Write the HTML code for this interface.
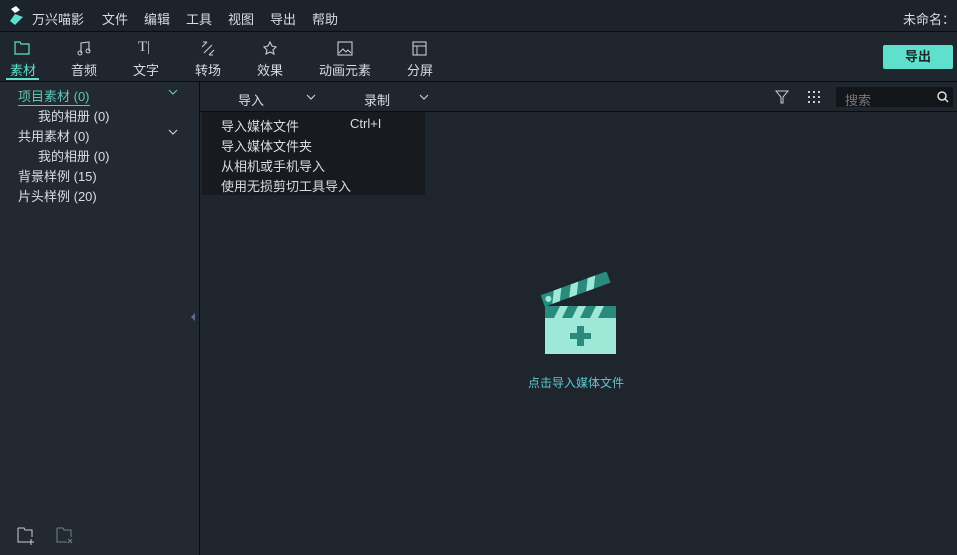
<!DOCTYPE html>
<html><head><meta charset="utf-8"><style>
*{margin:0;padding:0;box-sizing:border-box}
body{width:957px;height:555px;background:#1f252d;font-family:"Liberation Sans","Noto Sans CJK SC",sans-serif;color:#d8dde2;font-size:13px;position:relative;overflow:hidden;white-space:nowrap}
.a{position:absolute}
.menu span{position:absolute;top:9px;font-size:13px}
.tb{position:absolute;top:60px;font-size:13px;color:#d8dde2}
.ic{position:absolute;top:41px}
.chev{position:absolute}
</style></head><body>
<div class="a" style="left:0;top:0;width:957px;height:31px;background:#1d232b"></div>
<div class="a" style="left:0;top:31px;width:957px;height:1px;background:#0b0d10"></div>
<div class="a menu" style="left:0;top:0;width:957px;height:31px">
<svg class="a" style="left:8px;top:6px" width="18" height="20"><path d="M3 3l5-3 4 4-5 3z" fill="#fff"/><path d="M7 8l8 3-8 8-5-4z" fill="#5ee0cc"/></svg>
<span style="left:32px">万兴喵影</span><span style="left:102px">文件</span><span style="left:144px">编辑</span><span style="left:186px">工具</span><span style="left:228px">视图</span><span style="left:270px">导出</span><span style="left:312px">帮助</span>
<span style="left:903px">未命名：</span>
</div>
<div class="a" style="left:0;top:32px;width:957px;height:49px;background:#1f262e"></div>
<div class="a" style="left:0;top:81px;width:957px;height:1px;background:#0b0d10"></div>
<svg class="ic" style="left:14px" width="16" height="14"><path d="M1 1h5l1 2h8v10H1z" fill="none" stroke="#5ee0cc" stroke-width="1.2"/></svg>
<svg class="ic" style="left:77px" width="14" height="15"><path d="M4 12V2l8-1v9" fill="none" stroke="#ccc" stroke-width="1.1"/><circle cx="3" cy="12" r="2" fill="none" stroke="#ccc"/><circle cx="11" cy="10" r="2" fill="none" stroke="#ccc"/></svg>
<div class="a" style="left:138px;top:39px;color:#ccc;font-size:15px;font-family:'Liberation Serif',serif">T|</div>
<svg class="ic" style="left:200px" width="16" height="15"><path d="M2 6l5-5M7 1h-4M14 9l-5 5M9 14h4M4 12L12 4" fill="none" stroke="#ccc" stroke-width="1.1"/></svg>
<svg class="ic" style="left:263px" width="14" height="14"><path d="M7 1l2 4 4 1-3 3 1 4-4-2-4 2 1-4-3-3 4-1z" fill="none" stroke="#ccc" stroke-width="1.1"/></svg>
<svg class="ic" style="left:337px" width="16" height="15"><rect x="1" y="1" width="14" height="13" fill="none" stroke="#ccc" stroke-width="1.1"/><path d="M2 12l4-4 3 3 2-2 3 3" fill="none" stroke="#ccc"/></svg>
<svg class="ic" style="left:412px" width="16" height="15"><rect x="1" y="1" width="13" height="13" fill="none" stroke="#ccc" stroke-width="1.1"/><path d="M1 5h13M5 5v9" stroke="#ccc"/></svg>
<div class="tb" style="left:10px;color:#5ee0cc">素材</div>
<div class="a" style="left:6px;top:78px;width:33px;height:2px;background:#5ee0cc"></div>
<div class="tb" style="left:71px">音频</div><div class="tb" style="left:133px">文字</div><div class="tb" style="left:195px">转场</div><div class="tb" style="left:257px">效果</div><div class="tb" style="left:319px">动画元素</div><div class="tb" style="left:407px">分屏</div>
<div class="a" style="left:883px;top:45px;width:70px;height:24px;background:#5ee0cc;border-radius:2px;color:#1a2a2a;font-weight:bold;text-align:center;line-height:24px">导出</div>
<div class="a" style="left:0;top:82px;width:199px;height:473px;background:#222931"></div>
<div class="a" style="left:199px;top:82px;width:1px;height:473px;background:#0b0d10"></div>
<div class="a" style="left:18px;top:86px;color:#5ec8b8;border-bottom:1px solid #5ec8b8">项目素材 (0)</div>
<svg class="chev" style="left:168px;top:89px" width="10" height="6"><path d="M1 1l4 4 4-4" fill="none" stroke="#5ec8b8" stroke-width="1.2"/></svg>
<div class="a" style="left:38px;top:106px">我的相册 (0)</div>
<div class="a" style="left:18px;top:126px">共用素材 (0)</div>
<svg class="chev" style="left:168px;top:129px" width="10" height="6"><path d="M1 1l4 4 4-4" fill="none" stroke="#ccc" stroke-width="1.2"/></svg>
<div class="a" style="left:38px;top:146px">我的相册 (0)</div>
<div class="a" style="left:18px;top:166px">背景样例 (15)</div>
<div class="a" style="left:18px;top:186px">片头样例 (20)</div>
<div class="a" style="left:191px;top:313px;width:0;height:0;border-top:4px solid transparent;border-bottom:4px solid transparent;border-right:4px solid #5a7088"></div>
<svg class="a" style="left:17px;top:527px" width="22" height="18"><path d="M1 1h6l1 2h7v7M1 1v14h10M14 12v6M11 15h6" fill="none" stroke="#ccc" stroke-width="1"/></svg>
<svg class="a" style="left:56px;top:527px" width="22" height="18"><path d="M1 1h6l1 2h7v7M1 1v14h10M12 12l4 4M16 12l-4 4" fill="none" stroke="#77808a" stroke-width="1"/></svg>
<div class="a" style="left:200px;top:82px;width:757px;height:29px;background:#1f262e"></div>
<div class="a" style="left:200px;top:111px;width:757px;height:1px;background:#0b0d10"></div>
<div class="a" style="left:238px;top:90px">导入</div>
<svg class="chev" style="left:306px;top:94px" width="10" height="6"><path d="M1 1l4 4 4-4" fill="none" stroke="#ccc" stroke-width="1.2"/></svg>
<div class="a" style="left:364px;top:90px">录制</div>
<svg class="chev" style="left:419px;top:94px" width="10" height="6"><path d="M1 1l4 4 4-4" fill="none" stroke="#ccc" stroke-width="1.2"/></svg>
<svg class="a" style="left:775px;top:90px" width="14" height="14"><path d="M1 1h12L8 7v6H6V7z" fill="none" stroke="#ccc"/></svg>
<svg class="a" style="left:808px;top:90px" width="14" height="14" fill="#ccc"><rect x="0" y="1" width="2" height="2"/><rect x="5" y="1" width="2" height="2"/><rect x="10" y="1" width="2" height="2"/><rect x="0" y="6" width="2" height="2"/><rect x="5" y="6" width="2" height="2"/><rect x="10" y="6" width="2" height="2"/><rect x="0" y="11" width="2" height="2"/><rect x="5" y="11" width="2" height="2"/><rect x="10" y="11" width="2" height="2"/></svg>
<div class="a" style="left:836px;top:87px;width:117px;height:20px;background:#12161a"></div>
<div class="a" style="left:845px;top:90px;color:#777">搜索</div>
<svg class="a" style="left:937px;top:91px" width="12" height="12"><circle cx="5" cy="5" r="4" fill="none" stroke="#ddd" stroke-width="1.5"/><path d="M8 8l3 3" stroke="#ddd" stroke-width="1.5"/></svg>
<div class="a" style="left:202px;top:112px;width:223px;height:83px;background:#171b20"></div>
<div class="a" style="left:221px;top:116px">导入媒体文件</div><div class="a" style="left:350px;top:116px">Ctrl+I</div>
<div class="a" style="left:221px;top:136px">导入媒体文件夹</div>
<div class="a" style="left:221px;top:156px">从相机或手机导入</div>
<div class="a" style="left:221px;top:176px">使用无损剪切工具导入</div>
<svg class="a" style="left:540px;top:272px" width="80" height="84">
<g transform="rotate(-20 6 32)"><rect x="4" y="22" width="70" height="12" fill="#2a8a7e"/><path d="M18 22h8l-6 12h-8zM36 22h8l-6 12h-8zM54 22h8l-6 12h-8z" fill="#9de8d6"/><circle cx="10" cy="28" r="3" fill="#9de8d6"/></g>
<rect x="5" y="34" width="71" height="12" fill="#2a8a7e"/><path d="M20 34h8l-6 12h-8zM38 34h8l-6 12h-8zM56 34h8l-6 12h-8z" fill="#9de8d6"/>
<rect x="5" y="46" width="71" height="36" fill="#9de8d6"/>
<path d="M37 54h7v7h7v6h-7v7h-7v-7h-7v-6h7z" fill="#2a8a7e"/></svg>
<div class="a" style="left:528px;top:374px;color:#5ec8d0;font-size:12px">点击导入媒体文件</div>
</body></html>
